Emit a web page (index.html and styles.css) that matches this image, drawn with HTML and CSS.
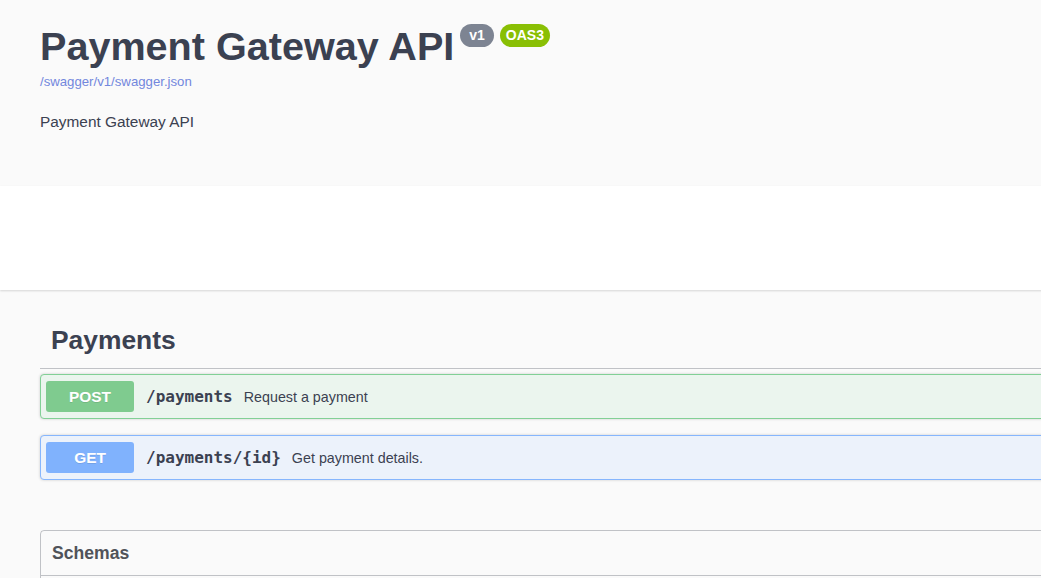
FILE: index.html
```html
<!DOCTYPE html>
<html lang="en">
<head>
<meta charset="utf-8">
<title>Payment Gateway API</title>
<link rel="stylesheet" href="styles.css">
</head>
<body>
<div class="page">
  <section class="info">
    <div class="title-row">
      <h1 class="title">Payment Gateway API</h1>
      <span class="badge badge-version">v1</span>
      <span class="badge badge-oas">OAS3</span>
    </div>
    <a class="base-url" href="#">/swagger/v1/swagger.json</a>
    <p class="description">Payment Gateway API</p>
  </section>

  <section class="schemes"></section>

  <section class="content">
    <h3 class="tag">Payments</h3>

    <div class="opblock opblock-post">
      <span class="method method-post">POST</span>
      <span class="path">/payments</span>
      <span class="summary">Request a payment</span>
    </div>

    <div class="opblock opblock-get">
      <span class="method method-get">GET</span>
      <span class="path">/payments/{id}</span>
      <span class="summary">Get payment details.</span>
    </div>

    <div class="models">
      <h4 class="models-title">Schemas</h4>
      <div class="models-body"></div>
    </div>
  </section>
</div>
</body>
</html>
```

FILE: styles.css
```css
html, body {
  margin: 0;
  padding: 0;
  overflow: hidden;
  background: #fafafa;
}

body {
  font-family: "Liberation Sans", Arial, sans-serif;
  color: #3b4151;
}

.page {
  width: 1460px;
}

.info {
  height: 186px;
  box-sizing: border-box;
  padding: 24px 0 0 40px;
  background: #fafafa;
}

.title-row {
  display: flex;
  align-items: flex-start;
}

.title {
  margin: 0;
  font-size: 39.6px;
  line-height: 45px;
  font-weight: bold;
  color: #3b4151;
}

.badge {
  display: inline-block;
  height: 23px;
  line-height: 23px;
  border-radius: 12px;
  font-size: 14px;
  font-weight: bold;
  color: #fff;
}

.badge-version {
  margin-left: 6px;
  padding: 0 9px;
  background: #7d8492;
}

.badge-oas {
  margin-left: 6px;
  padding: 0 6px;
  background: #89bf04;
}

.base-url {
  display: block;
  margin-top: 5px;
  font-size: 13.2px;
  line-height: 15px;
  color: #7287dd;
  text-decoration: none;
}

.description {
  margin: 23px 0 0;
  font-size: 15.4px;
  line-height: 20px;
  color: #3b4151;
}

.schemes {
  height: 104px;
  background: #fff;
  box-shadow: 0 1px 2px 0 rgba(0, 0, 0, 0.15);
}

.content {
  padding: 33px 0 40px 40px;
}

.tag {
  margin: 0;
  padding: 0 0 11px 11px;
  font-size: 26.4px;
  line-height: 34px;
  font-weight: bold;
  color: #3b4151;
  border-bottom: 1px solid rgba(59, 65, 81, 0.3);
}

.opblock {
  display: flex;
  align-items: center;
  margin-top: 5px;
  padding: 6px 5px;
  border: 1px solid;
  border-radius: 4px;
  box-shadow: 0 0 3px rgba(0, 0, 0, 0.19);
}

.opblock + .opblock {
  margin-top: 16px;
}

.opblock-post {
  background: #ebf5ee;
  border-color: #82d096;
}

.opblock-get {
  background: #ecf2fb;
  border-color: #86b6fd;
}

.method {
  width: 88px;
  height: 31px;
  line-height: 31px;
  text-align: center;
  border-radius: 3px;
  font-size: 15.4px;
  font-weight: bold;
  color: #fff;
  text-shadow: 0 1px 0 rgba(0, 0, 0, 0.1);
}

.method-post {
  background: #7fcb8f;
}

.method-get {
  background: #80b2fd;
}

.path {
  margin-left: 12px;
  font-family: "DejaVu Sans Mono", "Liberation Mono", monospace;
  font-size: 16px;
  font-weight: bold;
  color: #3b4151;
}

.summary {
  margin-left: 11px;
  font-size: 14.3px;
  color: #3b4151;
}

.models {
  margin-top: 50px;
  border: 1px solid rgba(59, 65, 81, 0.3);
  border-radius: 4px;
}

.models-title {
  margin: 0;
  padding: 11px 22px 11px 11px;
  font-size: 17.6px;
  line-height: 22px;
  font-weight: bold;
  color: #505359;
  border-bottom: 1px solid rgba(59, 65, 81, 0.3);
}

.models-body {
  height: 120px;
}
```
